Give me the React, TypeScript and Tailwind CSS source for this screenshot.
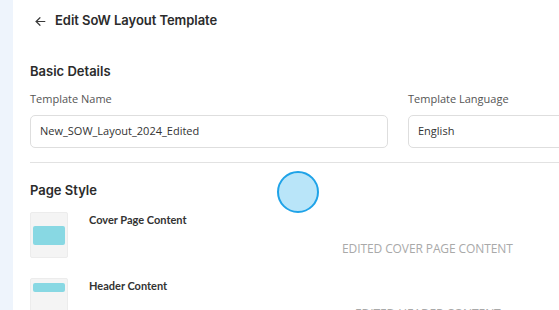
import React from 'react';

const Thumb: React.FC<{ variant: 'cover' | 'header' }> = ({ variant }) => (
  <div className="w-[38px] h-[46px] shrink-0 bg-[#f4f4f4] border border-[#ececec] rounded-[2px] flex flex-col px-[2px]">
    {variant === 'cover' ? (
      <div className="mt-[13px] h-[19px] bg-[#88d8e3] rounded-[2px]" />
    ) : (
      <div className="mt-[4px] h-[9px] bg-[#88d8e3] rounded-[2px]" />
    )}
  </div>
);

export default function App() {
  return (
    <div className="w-[559px] h-[310px] overflow-hidden bg-white flex font-['Open_Sans',sans-serif] select-none">
      {/* Side strip */}
      <div className="w-[13px] shrink-0 bg-[#eef4fc]" />

      <div className="relative flex-1 pl-[17px] overflow-hidden">
        {/* Header */}
        <div className="flex items-center h-[42px] pl-[4px] gap-[8px]">
          <svg width="13" height="13" viewBox="0 0 24 24" fill="none" stroke="#3a3a3a" strokeWidth="2.2" strokeLinecap="round" strokeLinejoin="round">
            <path d="M20 12H4" />
            <path d="M11 19l-7-7 7-7" />
          </svg>
          <span className="font-['Inter',sans-serif] text-[13px] font-semibold text-[#2b2b2b] tracking-[-0.05px]">
            Edit SoW Layout Template
          </span>
        </div>

        {/* Basic Details */}
        <div className="mt-[20px] font-['Inter',sans-serif] text-[13px] font-semibold text-[#2b2b2b]">
          Basic Details
        </div>

        <div className="mt-[10px] flex gap-[20px]">
          <div className="w-[358px] shrink-0 flex flex-col">
            <label className="text-[11px] text-[#555] leading-[14px]">Template Name</label>
            <div className="mt-[9px] h-[33px] border border-[#dedede] rounded-[5px] flex items-center px-[9px] text-[11px] text-[#333]">
              New_SOW_Layout_2024_Edited
            </div>
          </div>
          <div className="w-[200px] shrink-0 flex flex-col">
            <label className="text-[11px] text-[#555] leading-[14px]">Template Language</label>
            <div className="mt-[9px] h-[33px] border border-[#dedede] rounded-[5px] flex items-center px-[9px] text-[11px] text-[#333]">
              English
            </div>
          </div>
        </div>

        <div className="mt-[14px] border-t border-[#e2e2e2]" />

        {/* Page Style */}
        <div className="mt-[18px] font-['Inter',sans-serif] text-[13px] font-semibold text-[#2b2b2b]">
          Page Style
        </div>

        <div className="mt-[12px] flex flex-col gap-[20px]">
          <div className="flex">
            <Thumb variant="cover" />
            <div className="ml-[21px] w-[253px] shrink-0 font-['Lato',sans-serif] text-[11px] font-bold text-[#333]">
              Cover Page Content
            </div>
            <div className="pt-[28px] text-[12px] text-[#a9a9a9] tracking-[-0.1px]">EDITED COVER PAGE CONTENT</div>
          </div>
          <div className="flex">
            <Thumb variant="header" />
            <div className="ml-[21px] w-[266px] shrink-0 font-['Lato',sans-serif] text-[11px] font-bold text-[#333]">
              Header Content
            </div>
            <div className="pt-[27px] text-[12px] text-[#a9a9a9] tracking-[-0.1px]">EDITED HEADER CONTENT</div>
          </div>
        </div>

        {/* Cursor click indicator */}
        <div className="absolute left-[264px] top-[171px] w-[42px] h-[42px] rounded-full bg-[#b9e5f9] border-2 border-[#1fa3e8]" />
      </div>
    </div>
  );
}
